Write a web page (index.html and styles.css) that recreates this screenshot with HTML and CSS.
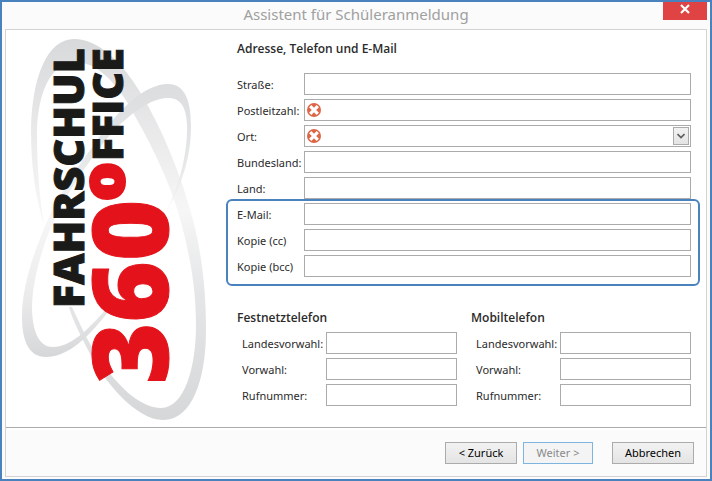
FILE: index.html
```html
<!DOCTYPE html>
<html lang="de">
<head>
<meta charset="utf-8">
<title>Assistent für Schüleranmeldung</title>
<meta name="viewport" content="width=device-width, initial-scale=1">
<link rel="stylesheet" href="styles.css">
</head>
<body>
<div class="window">
  <header class="titlebar">
    <h1 class="title">Assistent für Schüleranmeldung</h1>
    <button class="close" type="button" aria-label="Schließen">
      <svg width="10" height="10" viewBox="0 0 10 10" aria-hidden="true"><path d="M1 1l8 8M9 1l-8 8" stroke="#fff" stroke-width="2.2" fill="none"/></svg>
    </button>
  </header>
  <form class="panel">
    <div class="body">
      <svg class="logo" width="188" height="386" viewBox="20 37 188 386" role="img" aria-label="Fahrschul Office 360°">
        <defs>
          <linearGradient id="g1" x1="0" y1="0" x2="0" y2="1">
            <stop offset="0" stop-color="#d8d9da"/><stop offset=".3" stop-color="#ededee"/><stop offset=".45" stop-color="#f6f6f7"/><stop offset=".65" stop-color="#e6e7e8"/><stop offset="1" stop-color="#d6d7d8"/>
          </linearGradient>
          <linearGradient id="g2" x1="0" y1="0" x2="0" y2="1">
            <stop offset="0" stop-color="#dcddde"/><stop offset=".25" stop-color="#e4e5e6"/><stop offset=".5" stop-color="#f6f6f7"/><stop offset=".75" stop-color="#ededee"/><stop offset="1" stop-color="#d6d7d8"/>
          </linearGradient>
        </defs>
        <path fill="url(#g1)" d="M44 225C35 196 31 165 31 130C32 75 48 39 74 39C98 39 122 62 140 92C163 130 181 175 193 220C202 255 206 290 206 330C206 380 192 420 163 420C137 420 105 384 88 350C80 334 73 321 69 307L72 307C84 333 92 350 108 371C125 393 144 408 161 408C185 408 196 366 196 325C196 288 190 256 181 222C169 178 148 138 127 102C114 81 96 62 75 62C51 62 37 94 37 134C37 165 39 194 44 225Z"/>
        <path fill="url(#g2)" d="M167 210C181 182 188 148 187 124C186 106 180 98 168 98C148 98 121 120 101 146C79 175 58 207 46 240C37 266 32 288 32 310C33 334 40 347 53 347C70 347 87 331 107 308L108 312C85 342 65 357 46 357C29 357 22 341 22 317C22 291 30 264 41 236C53 204 72 174 91 149C115 113 143 84 168 84C185 84 191 101 191 126C191 158 181 187 167 210Z"/>
        <g class="wordmark">
          <text class="dark" transform="translate(84 308) rotate(-90)">FAHRSCHUL</text>
          <text class="dark" transform="translate(123 161) rotate(-90)">FFICE</text>
          <text class="degree" transform="translate(124 201) rotate(-90)">o</text>
          <text class="number" transform="translate(168 384) rotate(-90)">360</text>
        </g>
      </svg>

      <div class="fields">
        <h2 class="heading page-heading">Adresse, Telefon und E-Mail</h2>
        <div class="rows">
          <div class="row"><label for="street">Straße:</label><input id="street" type="text"></div>
          <div class="row"><label for="zip">Postleitzahl:</label>
            <span class="control"><input id="zip" type="text" required>
              <svg class="invalid" width="14" height="14" viewBox="0 0 14 14" aria-hidden="true"><circle cx="7" cy="7" r="7" fill="#dd6647"/><path d="M3.2 3.2l7.6 7.6M10.8 3.2l-7.6 7.6" stroke="#fff" stroke-width="3.2"/></svg>
            </span></div>
          <div class="row"><label for="city">Ort:</label>
            <span class="control"><select id="city" required><option value=""></option></select>
              <svg class="invalid" width="14" height="14" viewBox="0 0 14 14" aria-hidden="true"><circle cx="7" cy="7" r="7" fill="#dd6647"/><path d="M3.2 3.2l7.6 7.6M10.8 3.2l-7.6 7.6" stroke="#fff" stroke-width="3.2"/></svg>
              <span class="arrow" aria-hidden="true"><svg width="8" height="6" viewBox="0 0 8 6"><path d="M0.5 1l3.5 3.5l3.5-3.5" fill="none" stroke="#606060" stroke-width="1.7"/></svg></span>
            </span></div>
          <div class="row"><label for="state">Bundesland:</label><input id="state" type="text"></div>
          <div class="row"><label for="country">Land:</label><input id="country" type="text"></div>
        </div>
        <div class="rows mail">
          <div class="row"><label for="mail">E-Mail:</label><input id="mail" type="email"></div>
          <div class="row"><label for="cc">Kopie (cc)</label><input id="cc" type="email"></div>
          <div class="row"><label for="bcc">Kopie (bcc)</label><input id="bcc" type="email"></div>
        </div>
        <div class="phones">
          <section>
            <h2 class="heading">Festnetztelefon</h2>
            <div class="rows phone">
              <div class="row"><label for="f1">Landesvorwahl:</label><input id="f1" type="tel"></div>
              <div class="row"><label for="f2">Vorwahl:</label><input id="f2" type="tel"></div>
              <div class="row"><label for="f3">Rufnummer:</label><input id="f3" type="tel"></div>
            </div>
          </section>
          <section>
            <h2 class="heading">Mobiltelefon</h2>
            <div class="rows phone">
              <div class="row"><label for="m1">Landesvorwahl:</label><input id="m1" type="tel"></div>
              <div class="row"><label for="m2">Vorwahl:</label><input id="m2" type="tel"></div>
              <div class="row"><label for="m3">Rufnummer:</label><input id="m3" type="tel"></div>
            </div>
          </section>
        </div>
      </div>
    </div>
    <footer class="actions">
      <button class="btn" type="button">&lt; Zurück</button>
      <button class="btn next" type="submit" disabled>Weiter &gt;</button>
      <button class="btn cancel" type="button">Abbrechen</button>
    </footer>
  </form>
</div>
</body>
</html>
```
FILE: styles.css
```css
* { box-sizing: border-box; }

body {
  margin: 0;
  font: 11px/16px "Noto Sans", "Open Sans", sans-serif;
  color: #2b2b2b;
}

.window {
  display: flex;
  flex-direction: column;
  min-height: 100vh;
  padding: 0 3px 2px;
  border: 2px solid #4a82bd;
  background: #fbfbfb;
}

.titlebar {
  display: grid;
  grid-template-columns: 44px 1fr 44px;
  height: 27px;
}

.title {
  grid-column: 2;
  margin: 0;
  font-size: 15px;
  font-weight: 400;
  line-height: 24px;
  text-align: center;
  color: #a0a0a0;
}

.close {
  display: flex;
  align-items: center;
  justify-content: center;
  height: 18px;
  padding: 0 0 4px;
  border: 0;
  background: #e04343;
}

.panel {
  display: flex;
  flex: 1;
  flex-direction: column;
  border: 1px solid #d3d3d3;
}

.body {
  display: flex;
  flex: 1;
  gap: 29px;
  padding: 7px 15px 4px 14px;
  border-bottom: 1px solid #ababab;
  background: #fff;
}

.logo { flex: none; }

.wordmark {
  font-family: "Open Sans", "Noto Sans", sans-serif;
  font-weight: 800;
}
.dark { font-size: 43px; fill: #1a1a18; stroke: #1a1a18; stroke-width: 1px; }
.degree { font-size: 61px; fill: #e4131b; stroke: #e4131b; stroke-width: 3px; }
.number { font-size: 105px; fill: #e4131b; stroke: #e4131b; stroke-width: 1px; }

.fields { flex: 1; min-width: 0; padding-top: 4px; }

.heading {
  margin: 0;
  font-family: "Open Sans", "Noto Sans", sans-serif;
  font-size: 12px;
  font-weight: 650;
}
.page-heading { margin-bottom: 16px; }

.rows { display: grid; gap: 4px; }

.row {
  display: grid;
  grid-template-columns: 67px 1fr;
  align-items: center;
}

label { padding-top: 1px; white-space: nowrap; }

input, select {
  display: block;
  width: 100%;
  min-width: 0;
  height: 22px;
  margin: 0;
  padding: 0 4px;
  border: 1px solid #ababab;
  border-radius: 0;
  background: #fff;
  font: inherit;
  color: inherit;
  appearance: none;
}

.control { position: relative; }
.control input, .control select { padding-left: 20px; }

.invalid { position: absolute; top: 4px; left: 3px; pointer-events: none; }

.arrow {
  position: absolute;
  top: 2px;
  right: 2px;
  display: flex;
  align-items: center;
  justify-content: center;
  width: 16px;
  height: 18px;
  border: 1px solid #ababab;
  background: linear-gradient(#f2f2f2, #e4e4e4);
  pointer-events: none;
}

.mail {
  margin: 0 -9px 0 -11px;
  padding: 2px 7px 7px 9px;
  border: 2px solid #4a82bd;
  border-radius: 6px;
}

.phones {
  display: grid;
  grid-template-columns: 1fr 1fr;
  gap: 14px;
  margin-top: 24px;
}

.phone { margin-top: 6px; padding-left: 5px; }
.phone .row { grid-template-columns: 84px 1fr; }

.actions {
  display: flex;
  justify-content: flex-end;
  gap: 6px;
  padding: 12px 12px 12px;
  border-top: 2px solid #fff;
}

.btn {
  min-width: 72px;
  height: 22px;
  padding: 0 8px;
  border: 1px solid #ababab;
  background: linear-gradient(#f2f2f2, #e4e4e4);
  font: inherit;
  color: #000;
}

.next { min-width: 70px; border-color: #7eb4e0; background: #f4f4f4; color: #8a8a8a; }
.cancel { min-width: 82px; margin-left: 13px; }
```
